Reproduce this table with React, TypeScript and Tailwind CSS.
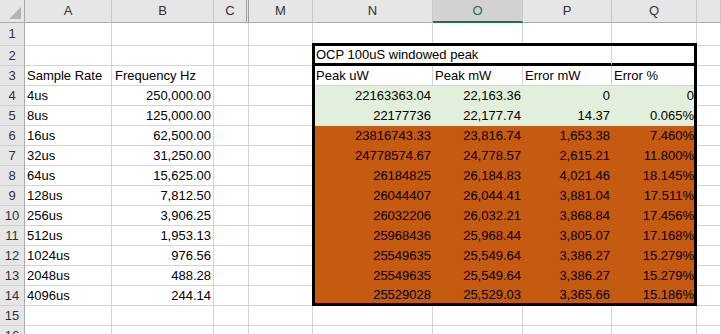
import React from 'react';

const colLetters = ['A', 'B', 'C', 'M', 'N', 'O', 'P', 'Q', ''];

const leftData: Record<number, [string, string]> = {
  3: ['Sample Rate', 'Frequency Hz'],
  4: ['4us', '250,000.00'],
  5: ['8us', '125,000.00'],
  6: ['16us', '62,500.00'],
  7: ['32us', '31,250.00'],
  8: ['64us', '15,625.00'],
  9: ['128us', '7,812.50'],
  10: ['256us', '3,906.25'],
  11: ['512us', '1,953.13'],
  12: ['1024us', '976.56'],
  13: ['2048us', '488.28'],
  14: ['4096us', '244.14'],
};

const peakRows: string[][] = [
  ['22163363.04', '22,163.36', '0', '0'],
  ['22177736', '22,177.74', '14.37', '0.065%'],
  ['23816743.33', '23,816.74', '1,653.38', '7.460%'],
  ['24778574.67', '24,778.57', '2,615.21', '11.800%'],
  ['26184825', '26,184.83', '4,021.46', '18.145%'],
  ['26044407', '26,044.41', '3,881.04', '17.511%'],
  ['26032206', '26,032.21', '3,868.84', '17.456%'],
  ['25968436', '25,968.44', '3,805.07', '17.168%'],
  ['25549635', '25,549.64', '3,386.27', '15.279%'],
  ['25549635', '25,549.64', '3,386.27', '15.279%'],
  ['25529028', '25,529.03', '3,365.66', '15.186%'],
];

const grid = 'border-r border-b border-[#d4d4d4]';

const RowHeader: React.FC<{ n: number }> = ({ n }) => (
  <div className="flex items-center justify-center bg-[#e6e6e6] border-r border-r-[#ababab] border-b border-b-[#d0d0d0] text-[#333]">
    {n}
  </div>
);

const PeakBox: React.FC = () => (
  <div className="col-span-4 row-span-13 -ml-px -mt-[3px] relative z-10 border-[3px] border-black grid grid-cols-[118px_90px_89px_82px] grid-rows-[20px_20px_repeat(10,20px)_17px]">
    <div className="col-span-2 flex items-center whitespace-nowrap border-b-[3px] border-black pl-px">
      OCP 100uS windowed peak
    </div>
    <div className="border-r border-r-[#d4d4d4] border-b-[3px] border-b-black" />
    <div className="border-b-[3px] border-black" />

    {['Peak uW', 'Peak mW', 'Error mW', 'Error %'].map((h, i) => (
      <div
        key={h}
        className={`flex items-center border-b border-[#d4d4d4] ${i < 3 ? 'border-r' : ''} ${i === 0 ? 'pl-px' : 'pl-[2px]'}`}
      >
        {h}
      </div>
    ))}

    {peakRows.map((row, r) =>
      row.map((v, i) => (
        <div
          key={`${r}-${i}`}
          className={`flex items-center justify-end ${r < 2 ? 'bg-[#e2efda]' : 'bg-[#c55a11]'} ${i < 3 ? 'pr-[2px]' : 'pr-0'}`}
        >
          {v}
        </div>
      ))
    )}
  </div>
);

export default function App() {
  const rows = Array.from({ length: 16 }, (_, i) => i + 1);

  return (
    <div className="w-[721px] h-[334px] overflow-hidden bg-white font-['Liberation_Sans',Arial,sans-serif] text-[13px] text-black">
      <div className="grid grid-cols-[25px_87px_102px_35px_64px_120px_90px_89px_85px_1fr] grid-rows-[23px_23px_repeat(15,20px)]">
        {/* corner */}
        <div className="bg-[#e6e6e6] border-r border-b border-[#ababab] flex items-end justify-end">
          <svg width="24" height="22" viewBox="0 0 24 22">
            <polygon points="21,7 21,19 9,19" fill="#b4b4b4" />
          </svg>
        </div>

        {/* column headers */}
        {colLetters.map((c, i) => {
          const selected = c === 'O';
          return (
            <div
              key={i}
              className={`flex items-center justify-center ${
                selected
                  ? 'bg-[#d2d2d2] text-[#217346] border-b-2 border-b-[#217346]'
                  : 'bg-[#e6e6e6] text-[#333] border-b border-b-[#ababab]'
              } ${c === 'C' ? 'border-r-[3px] border-double border-r-[#a0a0a0]' : 'border-r border-r-[#c8c8c8]'}`}
            >
              {c}
            </div>
          );
        })}

        {rows.map((r) => {
          const d = leftData[r];
          return (
            <React.Fragment key={r}>
              <RowHeader n={r} />
              <div className={`${grid} flex items-center whitespace-nowrap pl-[2px]`}>{d ? d[0] : ''}</div>
              <div
                className={`${grid} flex items-center whitespace-nowrap ${
                  r === 3 ? 'pl-[3px]' : 'justify-end pr-[2px]'
                }`}
              >
                {d ? d[1] : ''}
              </div>
              <div className={grid} />
              <div className={grid} />
              {r === 2 && <PeakBox />}
              {(r < 2 || r > 14) && (
                <>
                  <div className={grid} />
                  <div className={grid} />
                  <div className={grid} />
                  <div className={grid} />
                </>
              )}
              <div className={grid} />
            </React.Fragment>
          );
        })}
      </div>
    </div>
  );
}
